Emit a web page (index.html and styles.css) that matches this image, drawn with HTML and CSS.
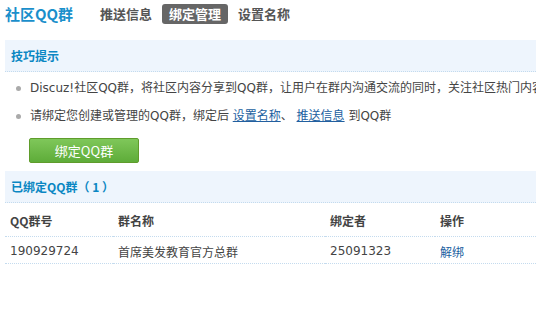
FILE: index.html
```html
<!DOCTYPE html>
<html lang="zh">
<head>
<meta charset="utf-8">
<link rel="stylesheet" href="styles.css">
</head>
<body>
<div class="page">
  <div class="topbar">
    <h1 class="title">社区QQ群</h1>
    <nav class="tabs">
      <a class="tab">推送信息</a>
      <a class="tab active">绑定管理</a>
      <a class="tab">设置名称</a>
    </nav>
  </div>

  <div class="sec-head">技巧提示</div>
  <ul class="tips">
    <li>Discuz!社区QQ群，将社区内容分享到QQ群，让用户在群内沟通交流的同时，关注社区热门内容，提升社区活跃度</li>
    <li>请绑定您创建或管理的QQ群，绑定后 <a class="link">设置名称</a>、 <a class="link">推送信息</a> 到QQ群</li>
  </ul>
  <div class="btn-row"><button class="btn">绑定QQ群</button></div>

  <div class="sec-head">已绑定QQ群（ 1 ）</div>
  <table class="grid">
    <thead>
      <tr><th class="c1">QQ群号</th><th class="c2">群名称</th><th class="c3">绑定者</th><th>操作</th></tr>
    </thead>
    <tbody>
      <tr><td>190929724</td><td>首席美发教育官方总群</td><td>25091323</td><td><a class="op">解绑</a></td></tr>
    </tbody>
  </table>
</div>
</body>
</html>
```

FILE: styles.css
```css
html, body {
  margin: 0;
  padding: 0;
  background: #fff;
  overflow: hidden;
}
body {
  font-family: "DejaVu Sans", "Noto Sans CJK SC", sans-serif;
  font-size: 12px;
  color: #444;
}
.page {
  width: 536px;
  padding-left: 5px;
  box-sizing: border-box;
  overflow: hidden;
}
.topbar {
  display: flex;
  align-items: center;
  height: 27px;
}
.title {
  margin: 0;
  font-family: "Noto Sans CJK SC", sans-serif;
  font-size: 15px;
  font-weight: bold;
  color: #1a8fcb;
  width: 88px;
  line-height: 20px;
}
.tabs {
  display: flex;
  gap: 3px;
}
.tab {
  font-family: "Noto Sans CJK SC", sans-serif;
  font-size: 13px;
  font-weight: bold;
  color: #555;
  padding: 0 7px;
  line-height: 20px;
  border-radius: 3px;
}
.tab.active {
  background: #666;
  color: #fff;
}
.sec-head {
  margin-top: 13px;
  height: 31px;
  line-height: 31px;
  background: #eef5fd;
  border-bottom: 1px dotted #c4dbee;
  padding-left: 6px;
  font-family: "Noto Sans CJK SC", sans-serif;
  font-weight: bold;
  color: #0a87c3;
  white-space: nowrap;
}
.btn-row + .sec-head {
  margin-top: 8px;
}
.tips {
  list-style: none;
  margin: 2px 0 0 0;
  padding: 0;
  white-space: nowrap;
}
.tips li {
  position: relative;
  padding-left: 25px;
  line-height: 28px;
}
.tips li::before {
  content: "";
  position: absolute;
  left: 11px;
  top: 12px;
  width: 5px;
  height: 5px;
  border-radius: 50%;
  background: #aaa;
}
.link {
  color: #225f9f;
  text-decoration: underline;
}
.btn-row {
  padding-left: 24px;
  margin-top: 8px;
}
.btn {
  width: 110px;
  height: 25px;
  border: 1px solid #5f9c2b;
  border-radius: 2px;
  background: linear-gradient(#7fc75a, #5eac39);
  color: #fff;
  font-family: "Noto Sans CJK SC", sans-serif;
  font-size: 13px;
  padding: 0;
}
.grid {
  width: 531px;
  border-collapse: collapse;
  font-size: 12px;
}
.grid th, .grid td {
  text-align: left;
  padding: 0 0 0 5px;
  border-bottom: 1px dotted #c4dbee;
  white-space: nowrap;
}
.grid th {
  height: 31px;
  font-family: "Noto Sans CJK SC", sans-serif;
  font-weight: bold;
  color: #444;
  padding-top: 2px;
}
.grid td {
  height: 24px;
  padding-top: 2px;
}
.c1 { width: 103px; }
.c2 { width: 207px; }
.c3 { width: 105px; }
.op {
  color: #225f9f;
}
```
